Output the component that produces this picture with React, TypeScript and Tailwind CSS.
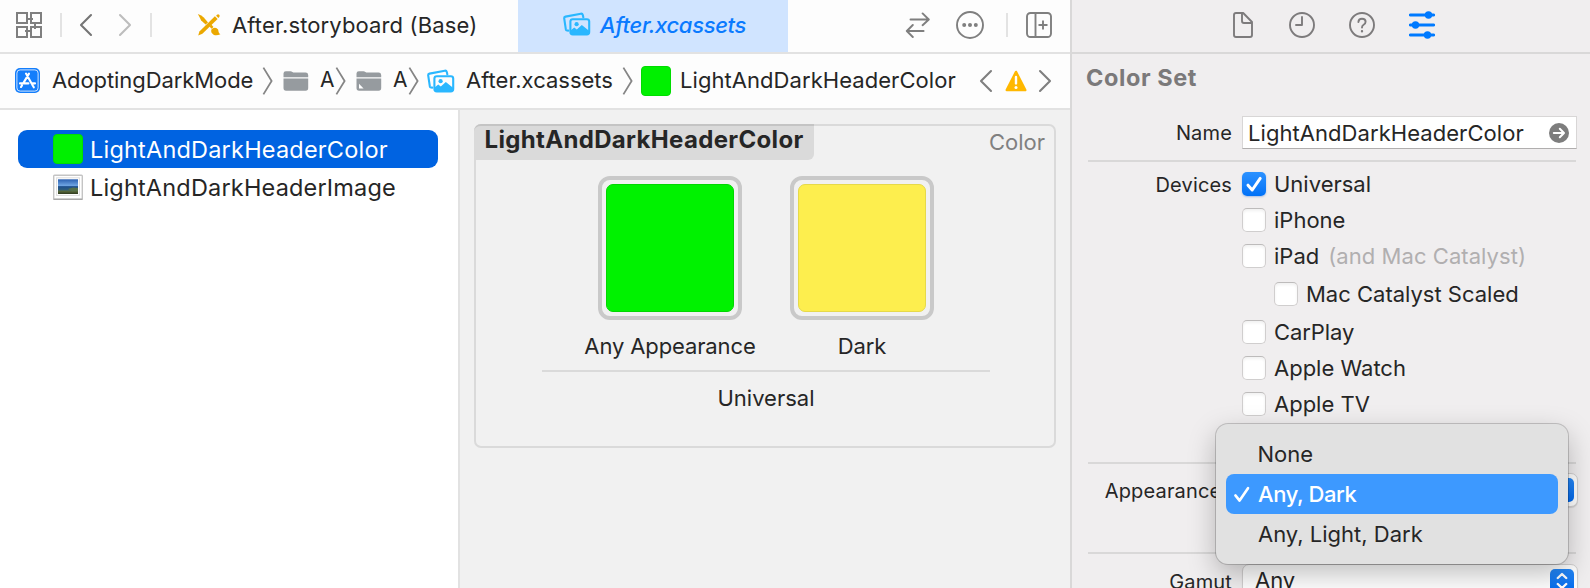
import type { ReactNode } from "react";

function AssetsIcon({ className }: { className: string }) {
  return (
    <svg viewBox="0 0 28 24" className={className} fill="none">
      <path
        d="M5.2 18.6 L4.1 18.5 Q3 18.3 2.8 17.2 L1.2 6.4 Q1 4.9 2.5 4.6 L17.8 1.7 Q19.4 1.4 19.8 2.9 L20.3 5.3"
        stroke="#2ab7ff"
        strokeWidth="2.1"
        strokeLinecap="round"
      />
      <rect x="7.4" y="7.2" width="18.8" height="15.2" rx="2.4" stroke="#2ab7ff" strokeWidth="2.1" />
      <circle cx="13.6" cy="12.2" r="2.1" fill="#2ab7ff" />
      <path d="M7.6 18.4 L11.2 15.4 L13.8 17.4 L18.8 13 L26 18.8 L26 22 L8 22.4 Z" fill="#2ab7ff" />
    </svg>
  );
}

function StoryboardIcon() {
  return (
    <svg viewBox="0 0 24 24" className="h-6 w-6 shrink-0" fill="#eba800">
      <path d="M0.9 1 Q4.6 2.4 6.8 4.6 L11 9.4 L8.6 11.6 L4.2 7.4 Z" />
      <path d="M17.9 3.2 L20.6 5.9 L5.4 20.8 L1.2 22.4 L2.4 18.5 Z" />
      <path d="M19.1 2.7 L20 1.7 Q21.2 0.9 22.2 1.8 Q23.1 2.8 22.3 3.9 L21.4 4.9 Z" />
      <path d="M12.4 13.4 L14.3 11.6 L16.5 13.9 L14.6 15.8 Z" />
      <path d="M14.4 16.6 Q16.4 14 19.3 15.1 Q21.8 16.3 21.6 19 Q21.8 20.6 23.4 21.2 Q19.6 23 16.6 21.7 Q13.4 19.8 14.4 16.6 Z" />
    </svg>
  );
}

function Chevron({ flip = false, className }: { flip?: boolean; className: string }) {
  return (
    <svg viewBox="0 0 14 24" className={`h-6 w-3.5 shrink-0 ${className}`} fill="none" stroke="currentColor" strokeWidth="2.1" strokeLinecap="round" strokeLinejoin="round">
      <path d={flip ? "M2 2 L12 12 L2 22" : "M12 2 L2 12 L12 22"} />
    </svg>
  );
}

function PathArrow({ className }: { className: string }) {
  return (
    <svg viewBox="0 0 12 28" className={`h-7 w-3 shrink-0 ${className}`} fill="none" stroke="#858585" strokeWidth="1.8">
      <path d="M1.4 0.6 L9.6 14 L1.4 27.4" />
    </svg>
  );
}

function Folder({ badge = false, className }: { badge?: boolean; className: string }) {
  return (
    <svg viewBox="0 0 26 20" className={`h-5 w-[26px] shrink-0 ${className}`} fill="#969b9f">
      <path d="M0.5 6.3 V2.6 Q0.5 0.2 2.9 0.2 H7.5 Q8.6 0.2 9.4 0.9 Q10.2 1.6 11.3 1.6 H22.6 Q25 1.6 25.2 4 V6.3 Z" />
      <path d="M0.5 7.5 H25.2 V17 Q25.2 19.8 22.6 19.8 H3.1 Q0.5 19.8 0.5 17 Z" />
      {badge && <path d="M3 12.8 L7.6 17.4 H3 Z" fill="#fff" />}
    </svg>
  );
}

function Divider({ className }: { className: string }) {
  return <div className={`h-6 w-0.5 shrink-0 bg-[#e3e3e3] ${className}`} />;
}

function TabBar() {
  return (
    <div className="flex h-[54px] shrink-0 items-stretch border-b-2 border-[#e2e2e2] bg-[#fdfdfd]">
      <div className="flex w-[518px] shrink-0 items-center pb-0.5">
        <svg viewBox="0 0 26 26" className="ml-4 h-[26px] w-[26px] shrink-0" fill="none" stroke="#7f7f7f" strokeWidth="2">
          <path d="M1 1H11V11H1ZM15 1H25V11H15ZM1 15H11V25H1ZM15 15H25V25H15Z" />
          <path d="M11 7H17M19 10V17M9 19H15" />
        </svg>
        <Divider className="ml-[18px]" />
        <Chevron className="ml-[17px] text-[#757575]" />
        <Chevron flip className="ml-[25px] text-[#bdbdbd]" />
        <Divider className="ml-[18px]" />
        <div className="ml-[45px] flex">
          <StoryboardIcon />
        </div>
        <span className="ml-[11px] tracking-[0.13px]">After.storyboard (Base)</span>
      </div>
      <div className="flex w-[270px] shrink-0 items-center bg-[#d0e4ff] pb-0.5 pl-[44px]">
        <AssetsIcon className="mb-0.5 ml-px h-6 w-7 shrink-0" />
        <span className="ml-[9px] font-medium tracking-[-0.34px] text-[#0a7aff] italic">After.xcassets</span>
      </div>
      <div className="flex items-center pb-0.5 pl-[117px]">
        <svg viewBox="0 0 26 26" className="h-[26px] w-[26px] shrink-0" fill="none" stroke="#7f7f7f" strokeWidth="1.9" strokeLinecap="round" strokeLinejoin="round">
          <path d="M5.5 7.5H23.6M17.6 1.4L23.8 7.5L17.6 13.2M18.6 19H2.2M7.8 13L1.8 19L7.8 25" />
        </svg>
        <svg viewBox="0 0 28 28" className="ml-[25px] h-7 w-7 shrink-0" fill="none" stroke="#7f7f7f" strokeWidth="1.9">
          <circle cx="14" cy="14" r="13" />
          <g fill="#7f7f7f" stroke="none">
            <circle cx="8.2" cy="14" r="2" />
            <circle cx="14" cy="14" r="2" />
            <circle cx="19.8" cy="14" r="2" />
          </g>
        </svg>
        <Divider className="ml-[22px]" />
        <svg viewBox="0 0 26 26" className="ml-[18px] h-[26px] w-[26px] shrink-0" fill="none" stroke="#7f7f7f" strokeWidth="1.9">
          <rect x="1" y="1" width="24" height="24" rx="3.5" />
          <path d="M9.5 1V25M17 8.5V17.5M12.5 13H21.5" />
        </svg>
      </div>
    </div>
  );
}

function PathBar() {
  return (
    <div className="flex h-14 shrink-0 items-center border-b-2 border-[#e2e2e2] bg-[#fdfdfd] pb-px pl-[15px]">
      <svg viewBox="0 0 25 25" className="h-[25px] w-[25px] shrink-0" fill="none">
        <rect width="25" height="25" rx="5" fill="#147efb" />
        <rect x="1.9" y="1.9" width="21.2" height="21.2" rx="3.2" stroke="#cfe4ff" strokeWidth="1" />
        <path d="M11 5.6L17.6 17.2M14 5.6L8.2 15.4M5 15.4H13.4M16.6 15.4H20M7 17.4L6 19M18 18L18.8 19.3" stroke="#fff" strokeWidth="2.1" strokeLinecap="round" />
      </svg>
      <span className="ml-3 w-[201px] pb-0.5 tracking-[-0.08px]">AdoptingDarkMode</span>
      <PathArrow className="ml-[9px]" />
      <Folder className="ml-[9px]" />
      <span className="ml-[11px] w-[14px] pb-0.5 text-[21px]">A</span>
      <PathArrow className="ml-[1px]" />
      <Folder badge className="ml-[9px]" />
      <span className="ml-[11px] w-[14px] pb-0.5 text-[21px]">A</span>
      <PathArrow className="ml-[1px]" />
      <AssetsIcon className="ml-[7px] h-6 w-7 shrink-0" />
      <span className="ml-[11px] w-[147px] pb-0.5">After.xcassets</span>
      <PathArrow className="ml-[9px]" />
      <div className="ml-[7px] h-[30px] w-[30px] shrink-0 rounded-[4px] border border-[#00dc00] bg-[#00f000]" />
      <span className="ml-[9px] w-[276px] pb-0.5 tracking-[0.061px]">LightAndDarkHeaderColor</span>
      <Chevron className="ml-[23px] text-[#7f7f7f]" />
      <svg viewBox="0 0 22 22" className="ml-3 h-[22px] w-[22px] shrink-0">
        <path d="M11 2L20.2 20H1.8Z" fill="#ffb800" stroke="#ffb800" strokeWidth="2.6" strokeLinejoin="round" />
        <path d="M11 7V13.4" stroke="#fff" strokeWidth="2.4" strokeLinecap="round" />
        <circle cx="11" cy="17.4" r="1.5" fill="#fff" />
      </svg>
      <Chevron flip className="ml-[11px] text-[#7f7f7f]" />
    </div>
  );
}

function AssetList() {
  return (
    <div className="w-[460px] shrink-0 border-r-2 border-[#e2e2e2] bg-white pt-5 pl-[18px] text-[23.5px]">
      <div className="flex h-[38px] w-[420px] items-center rounded-[9px] bg-[#0063e1] pl-[35px] text-white">
        <div className="h-[30px] w-[30px] shrink-0 rounded-[4px] border border-[#00dc00] bg-[#00f000]" />
        <span className="ml-[7px] pt-0.5 tracking-[0.2px]">LightAndDarkHeaderColor</span>
      </div>
      <div className="flex h-[38px] w-[420px] items-center pl-[35px]">
        <svg viewBox="0 0 30 26" className="h-[26px] w-[30px] shrink-0">
          <defs>
            <linearGradient id="scene" x1="0" y1="0" x2="0" y2="1">
              <stop offset="0" stopColor="#2a5fb0" />
              <stop offset="0.42" stopColor="#6ea4e2" />
              <stop offset="0.5" stopColor="#1d4f8c" />
              <stop offset="0.72" stopColor="#2e5d7c" />
              <stop offset="0.8" stopColor="#5a6b3c" />
              <stop offset="1" stopColor="#2f3a1f" />
            </linearGradient>
          </defs>
          <rect x="0.7" y="1.2" width="28.6" height="24" rx="0.8" fill="#fff" stroke="#c4c4c4" strokeWidth="1.4" />
          <path d="M0.5 25.3H29.5" stroke="#a5a5a5" strokeWidth="1.2" />
          <rect x="3.6" y="3.8" width="22.8" height="17.6" fill="none" stroke="#dedede" />
          <rect x="5" y="5.3" width="20" height="14.7" fill="url(#scene)" />
          <path d="M15 15L20 13.6L25 14V17L19 17.4Z" fill="#55704a" />
        </svg>
        <span className="ml-[7px] pt-0.5 tracking-[0.18px]">LightAndDarkHeaderImage</span>
      </div>
    </div>
  );
}

function Swatch({ label, color }: { label: string; color: string }) {
  return (
    <div className="flex w-[192px] flex-col items-center">
      <div className="h-36 w-36 rounded-[12px] border-4 border-[#c9c9c9] p-1">
        <div className={`h-32 w-32 rounded-[7px] border ${color}`} />
      </div>
      <span className="mt-3 tracking-[-0.12px]">{label}</span>
    </div>
  );
}

function AssetEditor() {
  return (
    <div className="flex-1 bg-[#f1f1f1] pt-3.5 pl-3.5">
      <div className="h-[324px] w-[582px] rounded-[7px] border-2 border-[#dadada]">
        <div className="-mt-0.5 -ml-0.5 flex justify-between pr-[9px]">
          <div className="h-9 w-[340px] rounded-tl-[7px] rounded-br-[6px] border-t-2 border-[#c4c4c4] bg-[#dadada] pl-[10.5px] text-2xl/[28px] font-bold tracking-[0.337px]">
            LightAndDarkHeaderColor
          </div>
          <span className="pt-1 text-[#808080]">Color</span>
        </div>
        <div className="mt-4 flex justify-center pl-0.5">
          <Swatch label="Any Appearance" color="border-[#00d800] bg-[#00f200]" />
          <Swatch label="Dark" color="border-[#e6d94a] bg-[#fdee4e]" />
        </div>
        <div className="mt-2.5 ml-[66px] h-0.5 w-[448px] bg-[#dadada]" />
        <div className="mt-3 pl-0.5 text-center">Universal</div>
      </div>
    </div>
  );
}

function Check({ on = false }: { on?: boolean }) {
  if (on) {
    return (
      <div className="flex h-6 w-6 shrink-0 items-center justify-center rounded-[5px] bg-linear-to-b from-[#2b92ff] to-[#0071f7] shadow-[0_1px_2px_rgba(0,80,200,0.3)]">
        <svg viewBox="0 0 24 24" className="h-6 w-6" fill="none" stroke="#fff" strokeWidth="3" strokeLinecap="round" strokeLinejoin="round">
          <path d="M6 13.2L10.2 18L18.2 6.4" />
        </svg>
      </div>
    );
  }
  return <div className="h-6 w-6 shrink-0 rounded-[5px] border border-[#d0cece] border-t-[#bdbbbb] bg-white shadow-[inset_0_2px_3px_rgba(0,0,0,0.06)]" />;
}

function FormRow({ label, className, children }: { label?: string; className: string; children: ReactNode }) {
  return (
    <div className={`flex items-center ${className}`}>
      <span className="w-[170px] shrink-0 pt-px pr-[10px] text-right text-xl/7 tracking-[0.15px]">{label}</span>
      {children}
    </div>
  );
}

function Rule() {
  return <div className="ml-4 h-0.5 w-[488px] shrink-0 bg-[#d9d8d8]" />;
}

function Stepper() {
  return (
    <div className="ml-auto flex h-6 w-6 items-center justify-center rounded-[5px] bg-linear-to-b from-[#2488f8] to-[#0069ee]">
      <svg viewBox="0 0 24 24" className="h-6 w-6" fill="none" stroke="#fff" strokeWidth="2.4" strokeLinecap="round" strokeLinejoin="round">
        <path d="M7.8 9L12 5L16.2 9M7.8 15L12 19L16.2 15" />
      </svg>
    </div>
  );
}

function Select({ value }: { value?: string }) {
  return (
    <div className="flex h-[34px] w-[336px] shrink-0 items-center rounded-[7px] border border-[#d2d0d0] bg-white pr-[3px] pl-3 shadow-[0_1px_1px_rgba(0,0,0,0.12)]">
      {value && <span className="pb-0.5">{value}</span>}
      <Stepper />
    </div>
  );
}

function AppearanceMenu() {
  return (
    <div className="absolute top-[424px] left-[144px] h-[140px] w-[352px] rounded-[12px] bg-[#e1e1e1] px-[10px] pt-[10px] shadow-[0_0_0_1px_rgba(0,0,0,0.18),0_10px_28px_rgba(0,0,0,0.26)]">
      <div className="flex h-10 items-center pl-[31.5px]">None</div>
      <div className="flex h-10 items-center rounded-[8px] bg-[#3d99ff] pl-[6px] text-white">
        <svg viewBox="0 0 20 20" className="h-5 w-5 shrink-0" fill="none" stroke="#fff" strokeWidth="2.6" strokeLinecap="round" strokeLinejoin="round">
          <path d="M3.4 11.4L7.6 16.6L16 4.2" />
        </svg>
        <span className="ml-[6px] font-medium tracking-[-0.4px]">Any, Dark</span>
      </div>
      <div className="flex h-10 items-center pl-[32px]">Any, Light, Dark</div>
    </div>
  );
}

function Inspector() {
  return (
    <div className="relative flex h-full w-[520px] shrink-0 flex-col border-l-2 border-[#d9d8d8] bg-[#f0eeef]">
      <div className="flex h-[54px] shrink-0 items-center border-b-2 border-[#d9d8d8] pb-0.5 pl-[161px]">
        <svg viewBox="0 0 20 26" className="h-[26px] w-5" fill="none" stroke="#7d7b7c" strokeWidth="1.9" strokeLinejoin="round">
          <path d="M3 1H10.2L19 10V23Q19 25 17 25H3Q1 25 1 23V3Q1 1 3 1ZM9 1V9Q9 11 11 11H19" />
        </svg>
        <svg viewBox="0 0 26 26" className="ml-9 h-[26px] w-[26px]" fill="none" stroke="#7d7b7c" strokeWidth="1.9" strokeLinecap="round" strokeLinejoin="round">
          <circle cx="13" cy="13" r="12" />
          <path d="M13 5V13H7" />
        </svg>
        <svg viewBox="0 0 26 26" className="ml-[34px] h-[26px] w-[26px]" fill="none" stroke="#7d7b7c" strokeWidth="1.9" strokeLinecap="round">
          <circle cx="13" cy="13" r="12" />
          <path d="M9.4 10Q9.6 6.8 13 6.8Q16.6 6.8 16.6 9.8Q16.6 11.6 14.6 12.8Q13 13.8 13 15.6" />
          <circle cx="13" cy="19.2" r="0.6" fill="#7d7b7c" strokeWidth="1.2" />
        </svg>
        <svg viewBox="0 0 26 28" className="ml-[34px] h-7 w-[26px]" stroke="#007aff" strokeWidth="3" strokeLinecap="round">
          <path d="M1.4 4H24.6M1.4 14H24.6M1.4 24H24.6" />
          <g fill="#007aff" stroke="none">
            <circle cx="19.5" cy="4" r="3.7" />
            <circle cx="6.5" cy="14" r="3.7" />
            <circle cx="18.5" cy="24" r="3.7" />
          </g>
        </svg>
      </div>
      <div className="flex h-[50px] shrink-0 items-center pb-0.5 pl-[14px] text-[23.5px] font-bold tracking-[0.58px] text-[#7b797a]">Color Set</div>
      <FormRow label="Name" className="h-14 shrink-0">
        <div className="mt-px flex h-[33px] w-[335px] items-center justify-between border border-[#d8d6d6] border-b-[#b0aeae] bg-white pr-[7px] pl-[5px]">
          <span className="tracking-[0.061px]">LightAndDarkHeaderColor</span>
          <svg viewBox="0 0 20 20" className="h-5 w-5" fill="none" stroke="#fff" strokeWidth="2" strokeLinecap="round" strokeLinejoin="round">
            <circle cx="10" cy="10" r="10" fill="#7d7d7d" stroke="none" />
            <path d="M4.8 10H14.8M10.8 5.8L15 10L10.8 14.2" />
          </svg>
        </div>
      </FormRow>
      <Rule />
      <div className="h-[300px] shrink-0 pt-1">
        <FormRow label="Devices" className="h-9">
          <Check on />
          <span className="ml-2">Universal</span>
        </FormRow>
        <FormRow className="h-9">
          <Check />
          <span className="ml-2">iPhone</span>
        </FormRow>
        <FormRow className="h-9">
          <Check />
          <span className="ml-2">iPad</span>
          <span className="ml-[9px] tracking-[0.06px] text-[#b1afb0]">(and Mac Catalyst)</span>
        </FormRow>
        <FormRow className="h-10">
          <div className="ml-8 flex">
            <Check />
          </div>
          <span className="ml-2">Mac Catalyst Scaled</span>
        </FormRow>
        <FormRow className="h-9">
          <Check />
          <span className="ml-2 tracking-[-0.08px]">CarPlay</span>
        </FormRow>
        <FormRow className="h-9">
          <Check />
          <span className="ml-2">Apple Watch</span>
        </FormRow>
        <FormRow className="h-9">
          <Check />
          <span className="ml-2">Apple TV</span>
        </FormRow>
      </div>
      <Rule />
      <div className="h-[88px] shrink-0 pt-2">
        <FormRow label="Appearances" className="h-9">
          <Select />
        </FormRow>
      </div>
      <Rule />
      <div className="h-[60px] shrink-0 pt-2.5">
        <FormRow label="Gamut" className="h-[34px]">
          <Select value="Any" />
        </FormRow>
      </div>
      <AppearanceMenu />
    </div>
  );
}

export default function App() {
  return (
    <div className="flex h-[588px] w-[1590px] overflow-hidden bg-white font-['Inter',sans-serif] text-[22px]/[28px] whitespace-nowrap text-[#262626]">
      <div className="flex h-full w-[1070px] shrink-0 flex-col">
        <TabBar />
        <PathBar />
        <div className="flex flex-1">
          <AssetList />
          <AssetEditor />
        </div>
      </div>
      <Inspector />
    </div>
  );
}
